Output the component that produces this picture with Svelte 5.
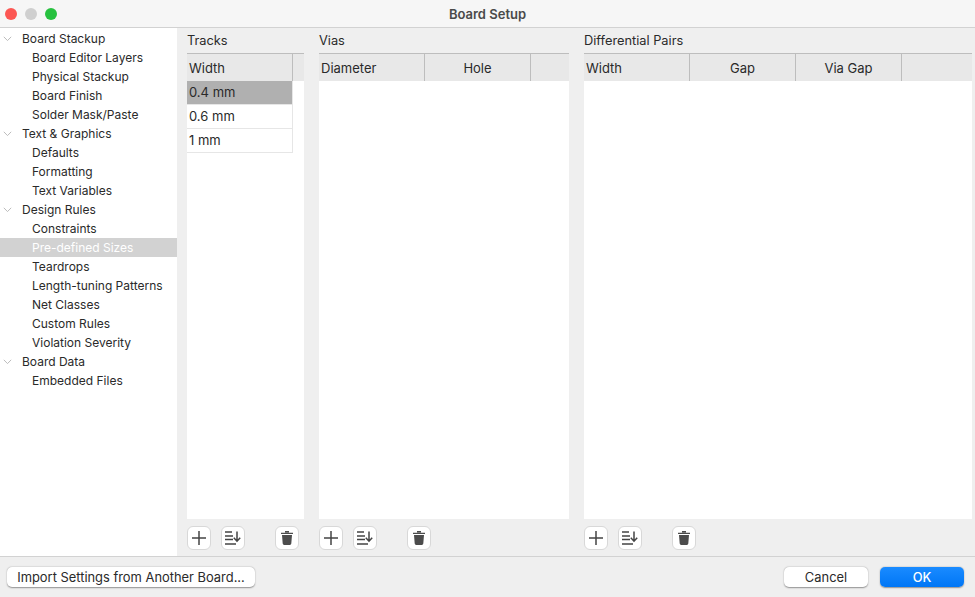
<script lang="ts">
  const tree = [
    { label: 'Board Stackup', children: ['Board Editor Layers', 'Physical Stackup', 'Board Finish', 'Solder Mask/Paste'] },
    { label: 'Text & Graphics', children: ['Defaults', 'Formatting', 'Text Variables'] },
    { label: 'Design Rules', children: ['Constraints', 'Pre-defined Sizes', 'Teardrops', 'Length-tuning Patterns', 'Net Classes', 'Custom Rules', 'Violation Severity'] },
    { label: 'Board Data', children: ['Embedded Files'] },
  ];

  const selectedPage = 'Pre-defined Sizes';

  const panels = [
    { title: 'Tracks', cls: 'tracks', columns: ['Width'], rows: ['0.4 mm', '0.6 mm', '1 mm'] },
    { title: 'Vias', cls: 'vias', columns: ['Diameter', 'Hole'], rows: [] },
    { title: 'Differential Pairs', cls: 'pairs', columns: ['Width', 'Gap', 'Via Gap'], rows: [] },
  ];
</script>

<div class="window">
  <header class="titlebar">
    <div class="lights">
      <span class="light red"></span>
      <span class="light grey"></span>
      <span class="light green"></span>
    </div>
    <div class="title">Board Setup</div>
  </header>

  <div class="body">
    <nav class="sidebar">
      {#each tree as group}
        <div class="row parent">
          <svg class="chevron" width="9" height="6" viewBox="0 0 9 6"><path d="M0.8 0.8 L4.5 4.6 L8.2 0.8" fill="none" stroke="#bcbcbc" stroke-width="1"/></svg>
          {group.label}
        </div>
        {#each group.children as child}
          <div class="row child" class:selected={child === selectedPage}>{child}</div>
        {/each}
      {/each}
    </nav>

    <main class="content">
      {#each panels as panel}
        <section class="panel {panel.cls}">
          <div class="panel-title">{panel.title}</div>
          <div class="grid">
            <div class="grid-head">
              {#each panel.columns as col, i}
                <div class="col" class:first={i === 0}>{col}</div>
              {/each}
            </div>
            {#each panel.rows as row, i}
              <div class="cell" class:current={i === 0}>{row}</div>
            {/each}
          </div>
          <div class="tools">
            <button class="tool" aria-label="Add">
              <svg width="14" height="14" viewBox="0 0 14 14"><path d="M7 0 V14 M0 7 H14" stroke="#444" stroke-width="1.5" fill="none"/></svg>
            </button>
            <button class="tool" aria-label="Sort">
              <svg width="16" height="14" viewBox="0 0 16 14">
                <path d="M0 1 H7 M0 5 H8 M0 8.6 H8 M0 13 H11" stroke="#444" stroke-width="1.5" fill="none"/>
                <path d="M12 0.5 V10 M8.8 6.8 L12 10.2 L15.2 6.8" stroke="#444" stroke-width="1.5" fill="none"/>
              </svg>
            </button>
            <button class="tool trash" aria-label="Delete">
              <svg width="12" height="14" viewBox="0 0 12 14">
                <path d="M4 0.7 H8 M0 2.4 H12" stroke="#4c4c4c" stroke-width="1.4" fill="none"/>
                <path d="M1 4 H11 L10.3 12.6 Q10.2 14 8.8 14 H3.2 Q1.8 14 1.7 12.6 Z" fill="#4c4c4c"/>
              </svg>
            </button>
          </div>
        </section>
      {/each}
    </main>
  </div>

  <footer class="footer">
    <button class="btn import">Import Settings from Another Board...</button>
    <div class="actions">
      <button class="btn cancel">Cancel</button>
      <button class="btn ok">OK</button>
    </div>
  </footer>
</div>

<style>
  :global(body) {
    margin: 0;
    background: #efefef;
  }

  .window {
    width: 975px;
    height: 597px;
    display: flex;
    flex-direction: column;
    overflow: hidden;
    font-family: Inter, "Liberation Sans", sans-serif;
    font-size: 12px;
    color: #2a2a2a;
    background: #efefef;
  }

  .titlebar {
    height: 27px;
    flex: none;
    display: flex;
    align-items: center;
    position: relative;
    background: #f6f6f6;
    border-bottom: 1px solid #d2d2d2;
  }

  .lights {
    display: flex;
    gap: 8px;
    padding-left: 5px;
  }

  .light {
    width: 12px;
    height: 12px;
    border-radius: 50%;
  }

  .red { background: #fc5753; }
  .grey { background: #cfcfcf; }
  .green { background: #27c13f; }

  .title {
    position: absolute;
    left: 0;
    right: 0;
    text-align: center;
    font-size: 13px;
    font-weight: 600;
    color: #4a4a4a;
  }

  .body {
    flex: 1;
    display: flex;
    min-height: 0;
    border-bottom: 1px solid #d2d2d2;
  }

  .sidebar {
    width: 177px;
    flex: none;
    background: #fff;
    padding-top: 1px;
  }

  .row {
    height: 19px;
    line-height: 19px;
    white-space: nowrap;
  }

  .parent {
    display: flex;
    align-items: center;
    padding-left: 3px;
  }

  .chevron {
    margin-right: 10px;
  }

  .child {
    padding-left: 32px;
  }

  .selected {
    background: #d2d2d2;
    color: #fff;
  }

  .content {
    flex: 1;
    display: flex;
    gap: 15px;
    padding-left: 10px;
  }

  .panel {
    display: flex;
    flex-direction: column;
  }

  .tracks { width: 117px; }
  .vias { width: 250px; }
  .pairs { width: 388px; }

  .panel-title {
    height: 25px;
    line-height: 25px;
    font-size: 12.8px;
  }

  .grid {
    height: 466px;
    background: #fff;
    font-size: 13px;
  }

  .grid-head {
    display: flex;
    height: 28px;
    background: #e8e8e8;
    border-top: 1px solid #bdbdbd;
    box-sizing: border-box;
  }

  .col {
    width: 106px;
    line-height: 28px;
    text-align: center;
    border-right: 1px solid #bdbdbd;
    box-sizing: border-box;
  }

  .col.first {
    text-align: left;
    padding-left: 2px;
  }

  .cell {
    width: 106px;
    height: 24px;
    line-height: 23px;
    box-sizing: border-box;
    padding-left: 2px;
    border-right: 1px solid #e6e6e6;
    border-bottom: 1px solid #e6e6e6;
  }

  .cell.current {
    background: linear-gradient(#b0b0b0, #b0b0b0) no-repeat left top / 105px 23px;
  }

  .tools {
    display: flex;
    gap: 10px;
    padding-top: 7px;
  }

  .tool {
    width: 24px;
    height: 24px;
    padding: 0;
    display: flex;
    align-items: center;
    justify-content: center;
    background: #fff;
    border: 1px solid #d8d8d8;
    border-radius: 6px;
  }

  .tool.trash {
    margin-left: 20px;
  }

  .footer {
    height: 40px;
    flex: none;
    display: flex;
    align-items: center;
    justify-content: space-between;
    box-sizing: border-box;
    padding: 0 11px 0 7px;
    font-size: 12.9px;
  }

  .actions {
    display: flex;
    gap: 12px;
  }

  .btn {
    height: 20px;
    padding: 0;
    font: inherit;
    color: #2a2a2a;
    background: #fff;
    border: none;
    border-radius: 5px;
    box-shadow: 0 0.5px 1.5px rgba(0, 0, 0, 0.4);
  }

  .import { width: 248px; }
  .cancel, .ok { width: 84px; }

  .ok {
    color: #fff;
    font-weight: 500;
    background: linear-gradient(#1a8bff, #0076f5);
  }
</style>
